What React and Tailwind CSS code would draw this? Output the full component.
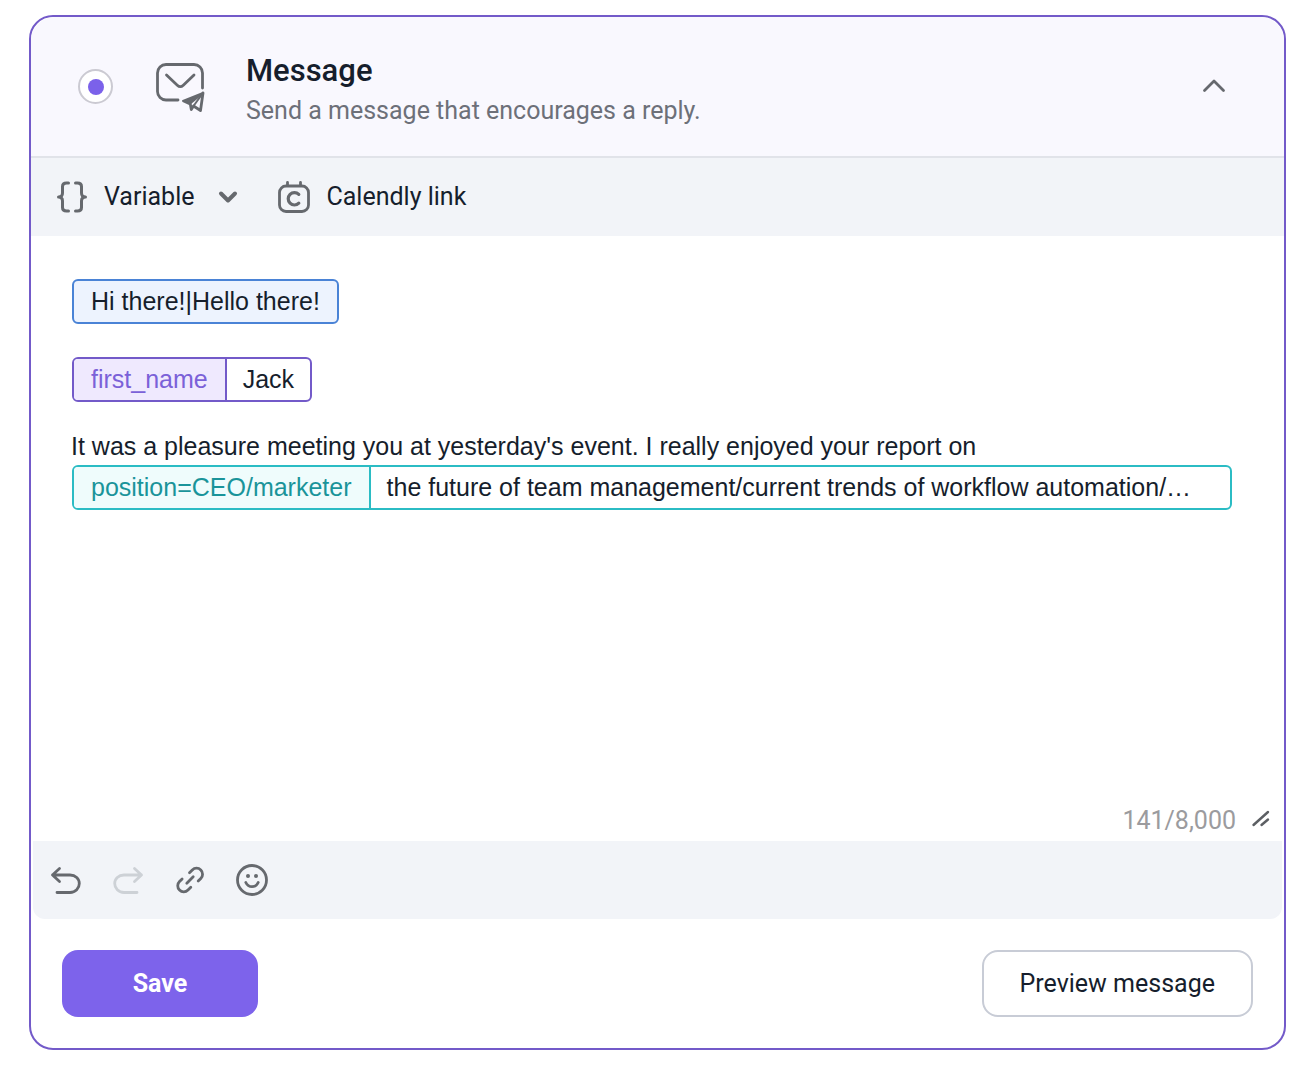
import React, { useState } from "react";

const BracesIcon = () => (
  <svg className="h-8 w-8" viewBox="0 0 32 32" fill="none" stroke="currentColor" strokeWidth="3" strokeLinecap="round" strokeLinejoin="round">
    <path d="M12.5 2H10.500C7.700 2 6.500 3.400 6.500 5.600v6.400c0 2.500-1.300 4-4 4 2.700 0 4 1.500 4 4v6.400c0 2.200 1.200 3.600 4 3.600h2" />
    <path d="M19.500 2h2c2.800 0 4 1.400 4 3.600v6.400c0 2.500 1.300 4 4 4-2.700 0-4 1.500-4 4v6.400c0 2.200-1.200 3.600-4 3.600h-2" />
  </svg>
);

const CalendlyIcon = () => (
  <svg className="h-8 w-8" viewBox="0 0 32 32" fill="none" stroke="currentColor" strokeWidth="2.8" strokeLinecap="round">
    <rect x="1.500" y="5" width="29" height="25.500" rx="6.500" />
    <path d="M9.500 1.500v3M22.500 1.500v3" />
    <path d="M20.800 13.400a6.200 6.200 0 1 0 0 8.800" strokeWidth="3.2" />
  </svg>
);

const MailSendIcon = () => (
  <svg className="h-12 w-12 shrink-0 overflow-visible text-[#66696e]" viewBox="0 0 48 48" fill="none" stroke="currentColor" strokeWidth="2.8" strokeLinecap="round" strokeLinejoin="round">
    <path d="M22 37H10a8.500 8.500 0 0 1-8.500-8.500V10A8.500 8.500 0 0 1 10 1.500h28a8.500 8.500 0 0 1 8.500 8.500v15" />
    <path d="M10.500 12l10.800 10.200c2 1.900 4 1.900 6 0L38 12" />
    <path d="M47 30l-20 8 6.500 3L44 32.500z" fill="currentColor" strokeWidth="2" />
    <path d="M47 30l-2.500 17.500-7-4.500-2.200 3.500-1-5.500" strokeWidth="2.8" />
    <path d="M45.500 32l-8 11" strokeWidth="2" />
  </svg>
);

const UndoIcon = ({ flipped }) => (
  <svg className={flipped ? "h-8 w-8 -scale-x-100" : "h-8 w-8"} viewBox="0 0 32 32" fill="none" stroke="currentColor" strokeWidth="2.8" strokeLinecap="round" strokeLinejoin="round">
    <path d="M9.500 4.500L2.500 11l7 6.500M2.500 11H20c5.500 0 9.300 3.600 9.300 8.500S25.500 28.500 20 28.500H7" />
  </svg>
);

const LinkIcon = () => (
  <svg className="h-8 w-8" viewBox="0 0 32 32" fill="none" stroke="currentColor" strokeWidth="2.8" strokeLinecap="round" strokeLinejoin="round">
    <path d="M12.800 19.200l6.400-6.400" />
    <path d="M15.500 8.700l2.800-2.800a6 6 0 0 1 8.500 0 6 6 0 0 1 0 8.500L24.200 17" />
    <path d="M16.800 23.300l-2.800 2.800a6 6 0 0 1-8.500 0 6 6 0 0 1 0-8.500l2.600-2.600" />
  </svg>
);

const SmileIcon = () => (
  <svg className="h-8 w-8" viewBox="0 0 32 32" fill="none" stroke="currentColor" strokeWidth="2.8" strokeLinecap="round">
    <circle cx="16" cy="16" r="14.500" />
    <path d="M9.800 18.500c1.300 2.700 3.500 4.200 6.200 4.200s4.900-1.500 6.200-4.200" />
    <circle cx="12" cy="12" r="2" fill="currentColor" stroke="none" />
    <circle cx="20" cy="12" r="2" fill="currentColor" stroke="none" />
  </svg>
);

// Inline variable: coloured name on the left, its value on the right
const VariableChip = ({ name, value, className, nameClassName }) => (
  <span className={`ml-px flex h-[45px] overflow-hidden rounded-md border-2 bg-white leading-[41px] ${className}`}>
    <span className={`shrink-0 border-r-2 px-[17px] ${nameClassName}`}>{name}</span>
    <span className="truncate px-4">{value}</span>
  </span>
);

const App = () => {
  const [open, setOpen] = useState(true);

  return (
    <main className="bg-white pt-[15px] pr-[14px] pb-6 pl-[29px] font-['Roboto',sans-serif] text-[25px] leading-8 text-[#161e2c]">
      <section className="rounded-3xl border-2 border-[#735ac9] bg-white">
        {/* Header */}
        <header className="flex h-[141px] items-center rounded-t-3xl border-b-2 border-[#e1e3e9] bg-[#f9f8fe] pr-14 pl-[47px]">
          <input
            type="radio"
            name="step"
            aria-label="Message"
            defaultChecked
            className="flex h-[35px] w-[35px] shrink-0 appearance-none items-center justify-center rounded-full border-2 border-[#cbcad2] bg-white before:h-4 before:w-4 before:rounded-full checked:before:bg-[#7b61ea]"
          />
          <div className="ml-[43px]">
            <MailSendIcon />
          </div>
          <div className="ml-[42px] flex-1 pt-2">
            <h2 className="text-[31px] leading-10 font-medium">Message</h2>
            <p className="leading-10 text-[#6d7079]">Send a message that encourages a reply.</p>
          </div>
          <button type="button" aria-label="Collapse" aria-expanded={open} onClick={() => setOpen(!open)} className="text-[#66696e]">
            <svg className="h-7 w-7" viewBox="0 0 28 28" fill="none" stroke="currentColor" strokeWidth="2.8" strokeLinecap="round" strokeLinejoin="round">
              <path d="M4.500 17.500L14 8l9.500 9.500" />
            </svg>
          </button>
        </header>

        {open && (
          <>
            {/* Insert toolbar */}
            <div className="flex h-[78px] items-center gap-10 bg-[#f2f4f8] px-[25px]">
              <button type="button" aria-haspopup="menu" className="flex items-center">
                <span className="mr-4 text-[#66696e]"><BracesIcon /></span>
                Variable
                <svg className="ml-6 h-5 w-5 text-[#66696e]" viewBox="0 0 20 20" fill="none" stroke="currentColor" strokeWidth="4" strokeLinecap="round" strokeLinejoin="round">
                  <path d="M3 6.500l7 7 7-7" />
                </svg>
              </button>
              <button type="button" className="flex items-center">
                <span className="mr-4 text-[#66696e]"><CalendlyIcon /></span>
                Calendly link
              </button>
            </div>

            {/* Message body */}
            <div className="flex min-h-[605px] flex-col justify-between">
              <div
                role="textbox"
                aria-multiline="true"
                aria-label="Message text"
                contentEditable
                suppressContentEditableWarning
                className="pt-[43px] pr-[52px] pl-10 font-['Liberation_Sans',sans-serif] outline-none"
              >
                <div className="flex">
                  <span className="ml-px h-[45px] rounded-md border-2 border-[#4a83d6] bg-[#edf3fe] px-[17px] leading-[41px]">
                    Hi there!|Hello there!
                  </span>
                </div>
                <div className="mt-[33px] flex">
                  <VariableChip name="first_name" value="Jack" className="border-[#735ac9]" nameClassName="border-[#735ac9] bg-[#efe9fe] text-[#7b61d8]" />
                </div>
                <p className="mt-7">It was a pleasure meeting you at yesterday's event. I really enjoyed your report on</p>
                <div className="mt-[3px]">
                  <VariableChip
                    name="position=CEO/marketer"
                    value="the future of team management/current trends of workflow automation/…"
                    className="border-[#2bbcc4]"
                    nameClassName="border-[#2bbcc4] bg-[#effcfc] text-[#1a949a]"
                  />
                </div>
              </div>
              <div className="flex items-center justify-end gap-3 pr-3 pb-1 text-[#9b9b9e]">
                <span>141/8,000</span>
                <svg className="h-6 w-6 text-[#5c5f63]" viewBox="0 0 24 24" fill="none" stroke="currentColor" strokeWidth="2.4" strokeLinecap="round">
                  <path d="M5.500 16L20 3M13.500 16l6.500-5.500" />
                </svg>
              </div>
            </div>

            {/* Editing tools */}
            <div className="mx-0.5 flex h-[78px] items-center gap-[30px] rounded-b-xl bg-[#f2f4f8] px-[17px] text-[#66696e]">
              <button type="button" aria-label="Undo"><UndoIcon /></button>
              <button type="button" aria-label="Redo" disabled className="text-[#cdd1d6]"><UndoIcon flipped /></button>
              <button type="button" aria-label="Insert link"><LinkIcon /></button>
              <button type="button" aria-label="Insert emoji"><SmileIcon /></button>
            </div>
          </>
        )}

        {/* Actions */}
        <footer className="flex items-center justify-between px-[31px] pt-[31px] pb-[31px]">
          <button type="button" className="h-[67px] w-[196px] rounded-2xl bg-[#7d63eb] font-bold text-white">Save</button>
          <button type="button" className="h-[67px] rounded-2xl border-2 border-[#c8ccd6] bg-white px-9">Preview message</button>
        </footer>
      </section>
    </main>
  );
};

export default App;
